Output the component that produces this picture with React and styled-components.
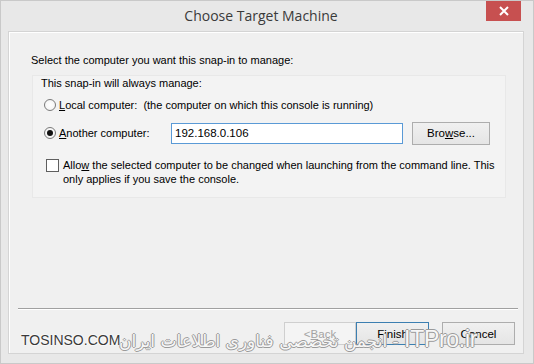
import React from 'react';
import styled, { createGlobalStyle } from 'styled-components';

const GlobalStyle = createGlobalStyle`
    html, body {
        margin: 0;
        padding: 0;
        background: #e9e9e9;
    }
    body {
        font-family: "Liberation Sans", Arial, sans-serif;
        font-size: 11px;
        color: #000;
    }
`;

const Window = styled.div`
    position: relative;
    width: 534px;
    height: 364px;
    box-sizing: border-box;
    display: flex;
    flex-direction: column;
    background: #e8e8e8;
    border: 1px solid #c9c9c9;
    padding: 0 9px 9px 7px;
    overflow: hidden;
`;

const TitleBar = styled.div`
    height: 30px;
    flex: none;
    display: flex;
    align-items: center;
    justify-content: center;
    position: relative;
`;

const Title = styled.div`
    font-family: "Open Sans", "Liberation Sans", sans-serif;
    font-size: 14px;
    color: #3a3a3a;
    margin-top: -2px;
    margin-right: 10px;
`;

const CloseButton = styled.div`
    position: absolute;
    top: -1px;
    right: 3px;
    width: 35px;
    height: 21px;
    background: #c75050;
    display: flex;
    align-items: center;
    justify-content: center;
`;

const Body = styled.div`
    flex: 1;
    display: flex;
    flex-direction: column;
    background: #f0f0f0;
    border: 1px solid #d4d4d4;
    box-shadow: inset 1px 1px 0 #ffffff;
`;

const Intro = styled.div`
    margin: 21px 0 0 22px;
    line-height: 14px;
`;

const GroupBox = styled.div`
    margin: 8px 17px 0 23px;
    height: 123px;
    box-sizing: border-box;
    background: #f3f3f3;
    border: 1px solid #e8e8e8;
    padding: 0 0 0 8px;
    display: flex;
    flex-direction: column;
`;

const GroupLabel = styled.div`
    line-height: 14px;
`;

const Row = styled.div`
    display: flex;
    align-items: center;
    height: 24px;
    margin-top: ${p => p.$mt || 0}px;
`;

const Radio = styled.span`
    width: 12px;
    height: 12px;
    box-sizing: border-box;
    border-radius: 50%;
    border: 1px solid #7a7a7a;
    background: radial-gradient(circle, #ffffff 0%, #f1f1f1 100%);
    margin: 0 3px 0 3px;
    display: flex;
    align-items: center;
    justify-content: center;
    flex: none;

    &::after {
        content: '';
        display: ${p => (p.$checked ? 'block' : 'none')};
        width: 6px;
        height: 6px;
        border-radius: 50%;
        background: #111;
    }
`;

const RadioLabel = styled.span`
    width: ${p => (p.$w ? p.$w + 'px' : 'auto')};
    flex: none;
    white-space: pre;
`;

const AddressInput = styled.div`
    width: 232px;
    height: 21px;
    box-sizing: border-box;
    border: 1px solid #5a9ad6;
    background: #fff;
    padding: 0 3px;
    display: flex;
    align-items: center;
    font-size: 11.5px;
`;

const Button = styled.div`
    width: ${p => p.$w || 73}px;
    height: 23px;
    box-sizing: border-box;
    display: flex;
    align-items: center;
    justify-content: center;
    border: 1px solid ${p => (p.$focus ? '#3c7fb1' : p.$disabled ? '#cfcfcf' : '#adadad')};
    background: ${p => (p.$disabled ? '#f4f4f4' : 'linear-gradient(#f0f0f0, #e5e5e5)')};
    color: ${p => (p.$disabled ? '#a3a3a3' : '#000')};
    font-size: 11.5px;
    flex: none;
`;

const CheckRow = styled.div`
    display: flex;
    align-items: flex-start;
    margin-top: 13px;
    line-height: 14px;
`;

const CheckBox = styled.span`
    width: 13px;
    height: 13px;
    box-sizing: border-box;
    border: 1px solid #5f5f5f;
    background: #fff;
    margin: 1px 4px 0 5px;
    flex: none;
`;

const Spacer = styled.div`
    flex: 1;
`;

const Separator = styled.div`
    margin: 0 5px 0 9px;
    height: 1px;
    background: #a0a0a0;
    border-bottom: 1px solid #ffffff;
`;

const Footer = styled.div`
    display: flex;
    justify-content: flex-end;
    padding: 12px 8px 8px 0;
`;

const Gap = styled.span`
    width: ${p => p.$w}px;
    flex: none;
`;

const Watermark = styled.div`
    position: absolute;
    left: 0;
    bottom: 10px;
    pointer-events: none;
`;

const SiteMark = styled.span`
    position: absolute;
    left: 20px;
    bottom: 5px;
    font-family: "Liberation Sans", Arial, sans-serif;
    font-size: 14px;
    color: #3a3a3a;
    text-shadow: 0 0 2px #fff, 0 0 2px #fff, 0 0 2px #fff;
    white-space: nowrap;
`;

const PersianMark = styled.span`
    position: absolute;
    left: 118px;
    bottom: 0px;
    font-family: "DejaVu Sans", sans-serif;
    font-size: 17px;
    color: #f7f7f7;
    white-space: nowrap;
    text-shadow: 1px 0 0 #9a9a9a, -1px 0 0 #9a9a9a, 0 1px 0 #9a9a9a, 0 -1px 0 #9a9a9a;

    b {
        font-family: "Liberation Sans", Arial, sans-serif;
        font-weight: 400;
        font-size: 23px;
        letter-spacing: -0.3px;
    }
`;

const U = styled.u`
    text-decoration: underline;
    text-underline-offset: 1px;
`;

export default function App() {
    return (
        <>
            <GlobalStyle />
            <Window>
                <TitleBar>
                    <Title>Choose Target Machine</Title>
                    <CloseButton>
                        <svg width="10" height="10" viewBox="0 0 10 10">
                            <path d="M1 1 L9 9 M9 1 L1 9" stroke="#fff" strokeWidth="2" />
                        </svg>
                    </CloseButton>
                </TitleBar>
                <Body>
                    <Intro>Select the computer you want this snap-in to manage:</Intro>
                    <GroupBox>
                        <GroupLabel>This snap-in will always manage:</GroupLabel>
                        <Row $mt={3}>
                            <Radio />
                            <RadioLabel><U>L</U>ocal computer:  (the computer on which this console is running)</RadioLabel>
                        </Row>
                        <Row $mt={4}>
                            <Radio $checked />
                            <RadioLabel $w={112}><U>A</U>nother computer:</RadioLabel>
                            <AddressInput>192.168.0.106</AddressInput>
                            <Gap $w={9} />
                            <Button $w={78}>Bro<U>w</U>se...</Button>
                        </Row>
                        <CheckRow>
                            <CheckBox />
                            <span>
                                Allo<U>w</U> the selected computer to be changed when launching from the command line. This
                                <br />only applies if you save the console.
                            </span>
                        </CheckRow>
                    </GroupBox>
                    <Spacer />
                    <Separator />
                    <Footer>
                        <Button $w={72} $disabled>&lt; <U>B</U>ack</Button>
                        <Button $focus>Finish</Button>
                        <Gap $w={13} />
                        <Button>Cancel</Button>
                    </Footer>
                </Body>
                <Watermark>
                    <PersianMark>انجمن تخصصی فناوری اطلاعات ایران - <b>ITPro.ir</b></PersianMark>
                    <SiteMark>TOSINSO.COM</SiteMark>
                </Watermark>
            </Window>
        </>
    );
}
